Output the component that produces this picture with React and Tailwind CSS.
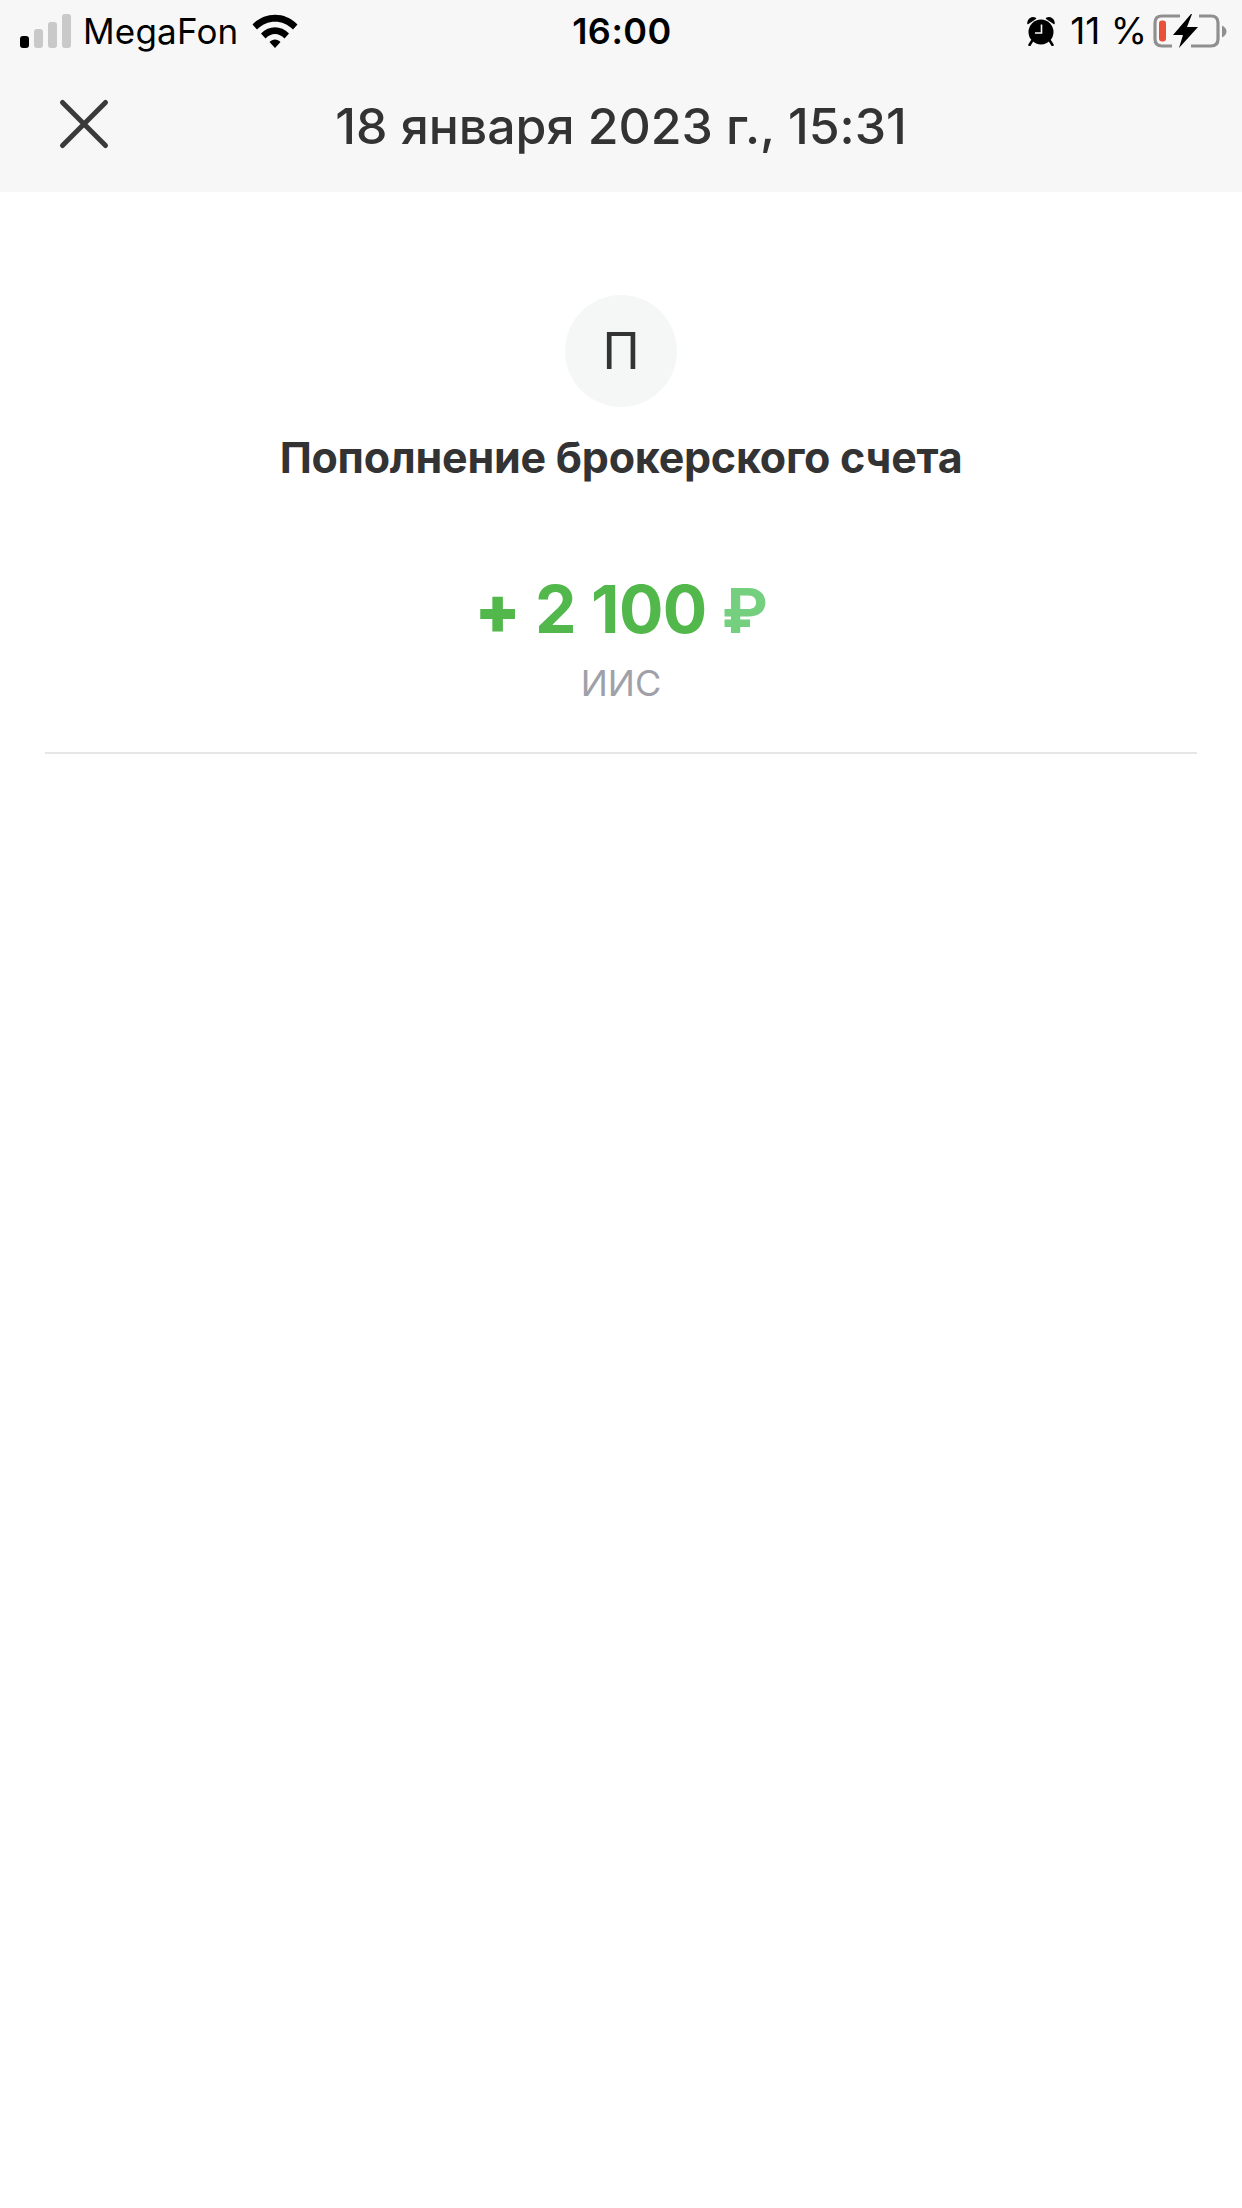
import React from "react";

const font = { fontFamily: '"Inter", "Liberation Sans", sans-serif' };

function Signal() {
  return (
    <svg width="52" height="34" viewBox="0 0 52 34" className="block">
      <rect x="0" y="22" width="9" height="12" rx="3" fill="#000" />
      <rect x="14" y="15" width="9" height="19" rx="3" fill="#c9c9c9" />
      <rect x="28" y="8" width="9" height="26" rx="3" fill="#c9c9c9" />
      <rect x="42" y="0" width="9" height="34" rx="3" fill="#c9c9c9" />
    </svg>
  );
}

function Wifi() {
  return (
    <svg width="46" height="34" viewBox="0 0 46 34" className="block">
      <path d="M0.5 10.5C13 -2.5 33 -2.5 45.5 10.5L41 15.5C31 5 15 5 5 15.5Z" fill="#000" />
      <path d="M9 19.5C17 11 29 11 37 19.5L32.5 24.5C27 18.5 19 18.5 13.5 24.5Z" fill="#000" />
      <path d="M17.5 28C20.5 24.5 25.5 24.5 28.5 28L23 34Z" fill="#000" />
    </svg>
  );
}

function Alarm() {
  return (
    <svg width="28" height="30" viewBox="0 0 28 30" className="block">
      <circle cx="14" cy="16" r="12.5" fill="#000" />
      <path d="M1 7.5C1 3 5 0.5 8.5 2.5ZM27 7.5C27 3 23 0.5 19.5 2.5Z" fill="#000" stroke="#000" strokeWidth="1.5" strokeLinejoin="round" />
      <path d="M5 25L2.5 29M23 25L25.5 29" stroke="#000" strokeWidth="2.5" strokeLinecap="round" />
      <path d="M14.5 8.5V17H8" stroke="#f7f7f7" strokeWidth="1.6" fill="none" />
    </svg>
  );
}

function Battery() {
  return (
    <svg width="74" height="34" viewBox="0 0 74 34" className="block">
      <path d="M27 2H9Q2 2 2 9V25Q2 32 9 32H19M46 2H58Q65 2 65 9V25Q65 32 58 32H38" fill="none" stroke="#8f8f8f" strokeWidth="3.2" />
      <path d="M69 11.5Q73.5 14 73.5 17.5Q73.5 21 69 23.5Z" fill="#8f8f8f" />
      <rect x="6" y="6.5" width="7" height="21" rx="3" fill="#e8503a" />
      <path d="M38 0L20 21H30L26 34L45 13H34L39 0Z" fill="#000" />
    </svg>
  );
}

export default function App() {
  return (
    <div className="w-[1242px] h-[2208px] bg-white flex flex-col" style={font}>
      <header className="bg-[#f7f7f7] h-[192px] flex flex-col shrink-0">
        <div className="h-[62px] flex items-center justify-between pl-[20px] pr-[15px] text-black">
          <div className="flex items-center w-[400px]">
            <Signal />
            <span className="ml-[11px] text-[35px] leading-[40px] tracking-[0.2px]">MegaFon</span>
            <span className="ml-[14px]"><Wifi /></span>
          </div>
          <span className="text-[36px] leading-[40px] font-semibold tracking-[0.5px] mr-[3px]">16:00</span>
          <div className="flex items-center justify-end w-[400px]">
            <Alarm />
            <span className="ml-[15px] mr-[6px] text-[37px] leading-[40px]">11 %</span>
            <Battery />
          </div>
        </div>
        <div className="flex-1 relative flex items-center justify-center pb-[2px]">
          <svg width="52" height="52" viewBox="0 0 52 52" className="absolute left-[58px] top-[36px]">
            <path d="M4.5 4.5L47.5 47.5M47.5 4.5L4.5 47.5" stroke="#3a3a3a" strokeWidth="5" strokeLinecap="round" />
          </svg>
          <span className="text-[50px] leading-[56px] font-medium tracking-[-0.05px] text-[#333333]">18 января 2023 г., 15:31</span>
        </div>
      </header>
      <main className="flex flex-col items-center px-[45px]">
        <div className="mt-[103px] w-[112px] h-[112px] rounded-full bg-[#f5f7f7] flex items-center justify-center text-[50px] leading-none text-[#333333]">
          П
        </div>
        <h1 className="mt-[26px] text-[43px] leading-[48px] font-bold tracking-[-0.25px] text-[#333333]">Пополнение брокерского счета</h1>
        <div className="mt-[89px] text-[66px] leading-[78px] font-bold text-[#52b84c] tracking-[-0.6px]">
          <span className="font-black">+</span> 2 100 <span className="text-[#74d07e] text-[62px]">₽</span>
        </div>
        <div className="mt-[12px] text-[36px] leading-[42px] text-[#a0a1a8]">ИИС</div>
        <div className="mt-[48px] w-full h-[2px] bg-[#e6e6e6]" />
      </main>
    </div>
  );
}
